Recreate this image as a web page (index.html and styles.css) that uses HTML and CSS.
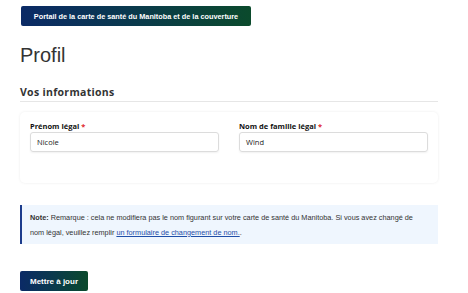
FILE: index.html
```html
<!DOCTYPE html>
<html lang="fr">
<head>
<meta charset="utf-8">
<link rel="stylesheet" href="styles.css">
</head>
<body>
<div class="page">
  <div class="banner">Portail de la carte de santé du Manitoba et de la couverture</div>
  <h1 class="title">Profil</h1>
  <h2 class="section">Vos informations</h2>
  <div class="card">
    <div class="field">
      <label class="label">Prénom légal <span class="req">*</span></label>
      <div class="input">Nicole</div>
    </div>
    <div class="field">
      <label class="label">Nom de famille légal <span class="req">*</span></label>
      <div class="input">Wind</div>
    </div>
  </div>
  <div class="note">
    <b>Note:</b> Remarque : cela ne modifiera pas le nom figurant sur votre carte de santé du Manitoba. Si vous avez changé de nom légal, veuillez remplir <a href="#" class="link">un formulaire de changement de nom.</a>.
  </div>
  <button class="btn">Mettre à jour</button>
</div>
</body>
</html>
```
FILE: styles.css
```css
html, body { margin: 0; padding: 0; background: #fff; }
.page {
  padding: 6px 30px 0 20px;
  font-family: "Liberation Sans", Arial, sans-serif;
  color: #222;
}
.banner {
  margin-left: 1px;
  width: 230px;
  height: 20px;
  box-sizing: border-box;
  border-radius: 2px;
  background: linear-gradient(90deg, #0b2a66 0%, #0a3a4c 50%, #0b4a2c 100%);
  color: #fff;
  font-size: 7.3px;
  font-weight: bold;
  display: flex;
  align-items: center;
  justify-content: center;
}
.title {
  margin: 18px 0 0 0;
  font-size: 20px;
  font-weight: normal;
  color: #333;
  line-height: 22px;
}
.section {
  margin: 19px 0 0 0;
  font-family: "Open Sans", sans-serif;
  font-size: 10.5px;
  font-weight: bold;
  letter-spacing: 0.3px;
  color: #333;
  line-height: 14px;
  padding-bottom: 2px;
  border-bottom: 1px solid #e6e6e6;
}
.card {
  margin-top: 10px;
  height: 71px;
  box-sizing: border-box;
  border-radius: 5px;
  box-shadow: 0 0 3px rgba(0,0,0,0.08);
  padding: 8px 10px 0 10px;
  display: grid;
  grid-template-columns: 1fr 1fr;
  column-gap: 20px;
  align-items: start;
}
.field { display: flex; flex-direction: column; }
.label {
  font-family: "Open Sans", sans-serif;
  font-size: 7.5px;
  font-weight: bold;
  color: #111;
  line-height: 12px;
}
.req { color: #e0262b; }
.input {
  margin-top: 0;
  height: 20px;
  box-sizing: border-box;
  border: 1px solid #dcdcdc;
  border-radius: 3px;
  box-shadow: 0 1px 2px rgba(0,0,0,0.06);
  padding: 0 6px;
  display: flex;
  align-items: center;
  font-family: "Open Sans", sans-serif;
  font-size: 7.5px;
  color: #222;
}
.note {
  margin-top: 22px;
  background: #eff6fe;
  border-left: 2px solid #1d3c8c;
  padding: 4.5px 18px 4.5px 8px;
  font-size: 7.3px;
  line-height: 15px;
  color: #333;
}
.link { color: #1f4ea8; text-decoration: underline; }
.btn {
  margin-top: 27px;
  width: 68px;
  height: 20px;
  border: none;
  border-radius: 2px;
  background: linear-gradient(90deg, #0b2a66 0%, #0a3a4c 50%, #0b4a2c 100%);
  color: #fff;
  font-family: "Liberation Sans", Arial, sans-serif;
  font-size: 8px;
  font-weight: bold;
  padding: 0;
  display: block;
}
```
